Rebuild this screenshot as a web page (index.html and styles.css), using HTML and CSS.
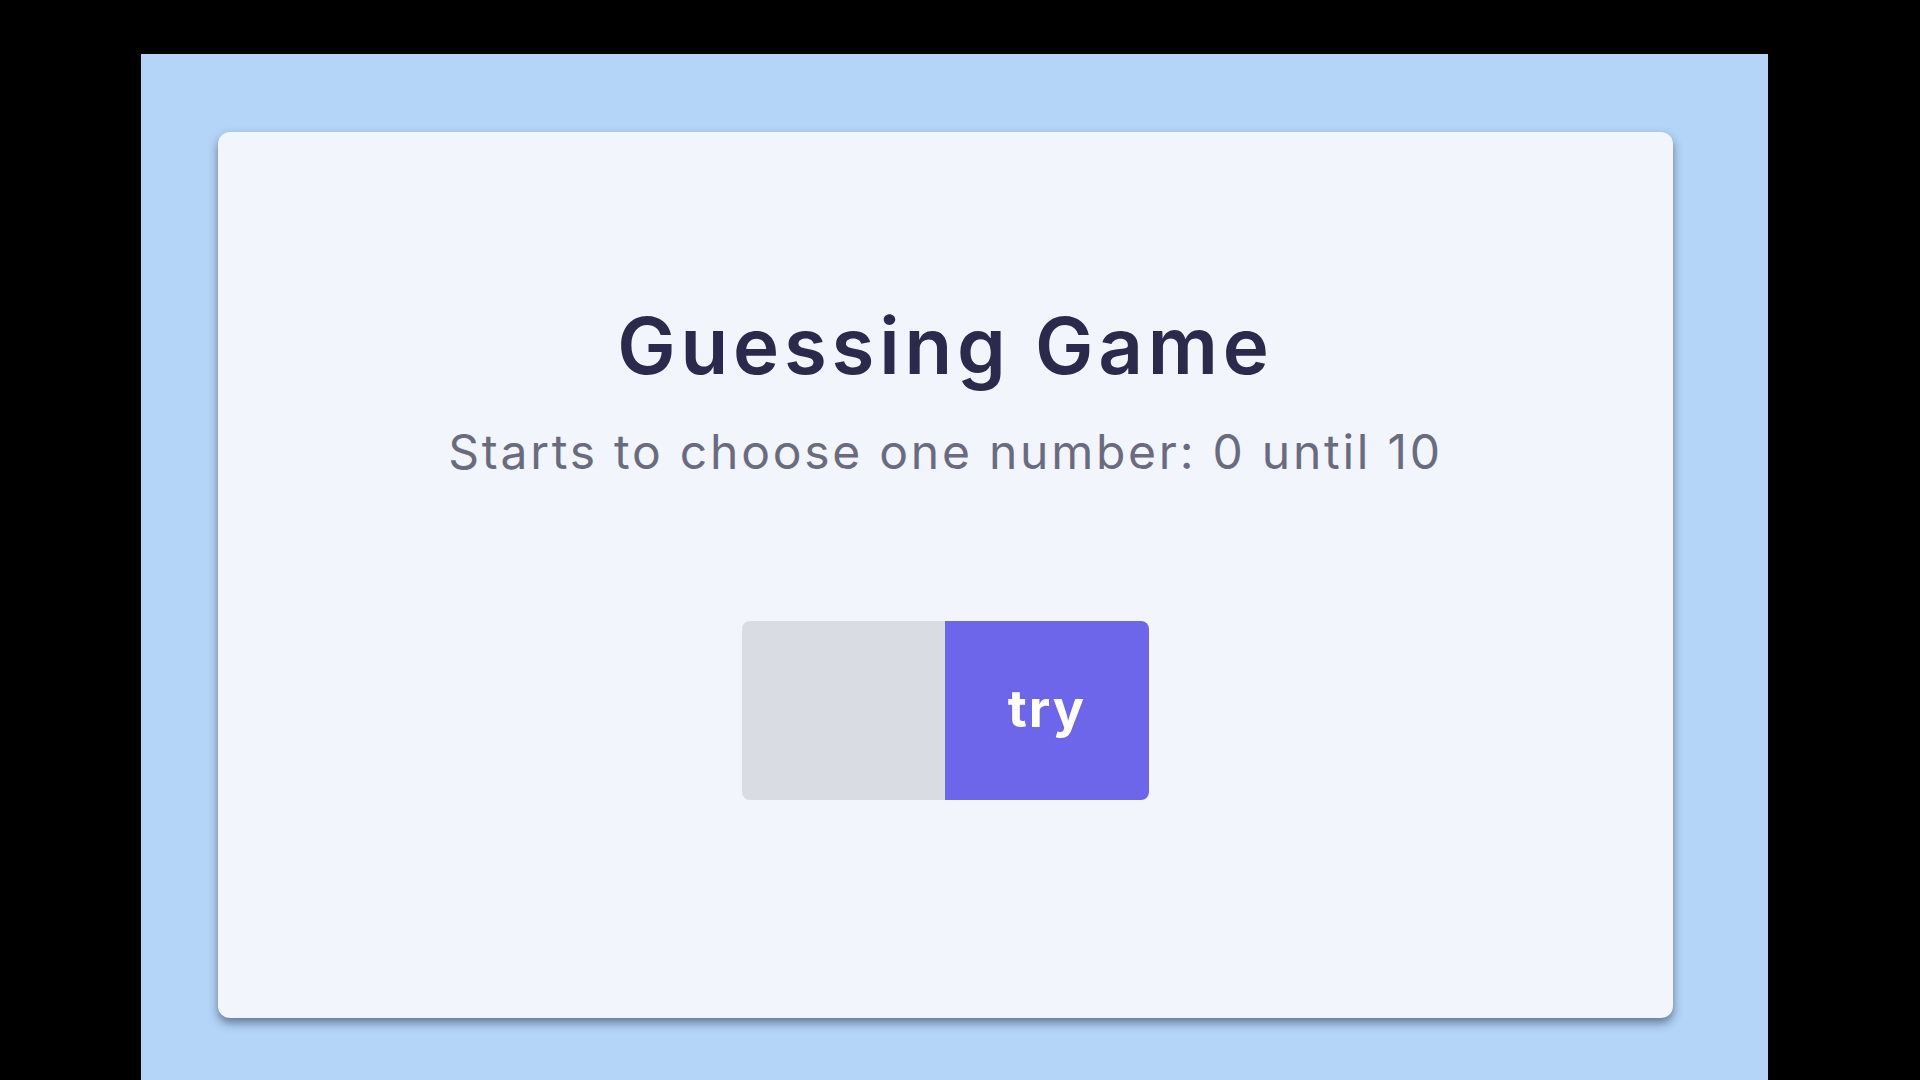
FILE: index.html
```html
<!DOCTYPE html>
<html lang="en">
<head>
<meta charset="utf-8">
<title>Guessing Game</title>
<link rel="stylesheet" href="styles.css">
</head>
<body>
  <div class="stage">
    <main class="card">
      <h1 class="title">Guessing Game</h1>
      <p class="subtitle">Starts to choose one number: 0 until 10</p>
      <form class="guess">
        <input class="guess-input" type="text" aria-label="number">
        <button class="guess-btn" type="button">try</button>
      </form>
    </main>
  </div>
</body>
</html>
```
FILE: styles.css
```css
html, body {
  margin: 0;
  padding: 0;
  background: #000;
  height: 100%;
  overflow: hidden;
}
.stage {
  margin: 54px 0 0 141px;
  width: 1627px;
  height: 1026px;
  background: #b4d5f7;
  padding: 78px 0 0 77px;
  box-sizing: border-box;
}
.card {
  width: 1455px;
  height: 886px;
  box-sizing: border-box;
  background: #f2f5fb;
  border-radius: 12px;
  box-shadow: 0 5px 10px rgba(20, 30, 60, 0.5);
  display: flex;
  flex-direction: column;
  align-items: center;
  padding-top: 166px;
}
.title {
  margin: 0;
  font-family: "Inter", "Open Sans", sans-serif;
  font-weight: 600;
  font-size: 78px;
  letter-spacing: 4.8px;
  line-height: 96px;
  color: #2b2a4c;
}
.subtitle {
  margin: 28px 0 0;
  font-family: "Inter", "Open Sans", sans-serif;
  font-weight: 400;
  font-size: 48px;
  letter-spacing: 2.75px;
  line-height: 60px;
  color: #6b6b80;
}
.guess {
  display: flex;
  margin-top: 139px;
}
.guess-input {
  width: 203px;
  height: 179px;
  box-sizing: border-box;
  border: none;
  outline: none;
  background: #d9dce3;
  border-radius: 8px 0 0 8px;
  margin: 0;
  padding: 0;
}
.guess-btn {
  width: 204px;
  height: 179px;
  border: none;
  margin: 0;
  background: #6e66ea;
  color: #fff;
  border-radius: 0 8px 8px 0;
  font-family: "Inter", "Open Sans", sans-serif;
  font-weight: 700;
  font-size: 52px;
  letter-spacing: 2px;
  padding: 0 0 4px;
}
```
